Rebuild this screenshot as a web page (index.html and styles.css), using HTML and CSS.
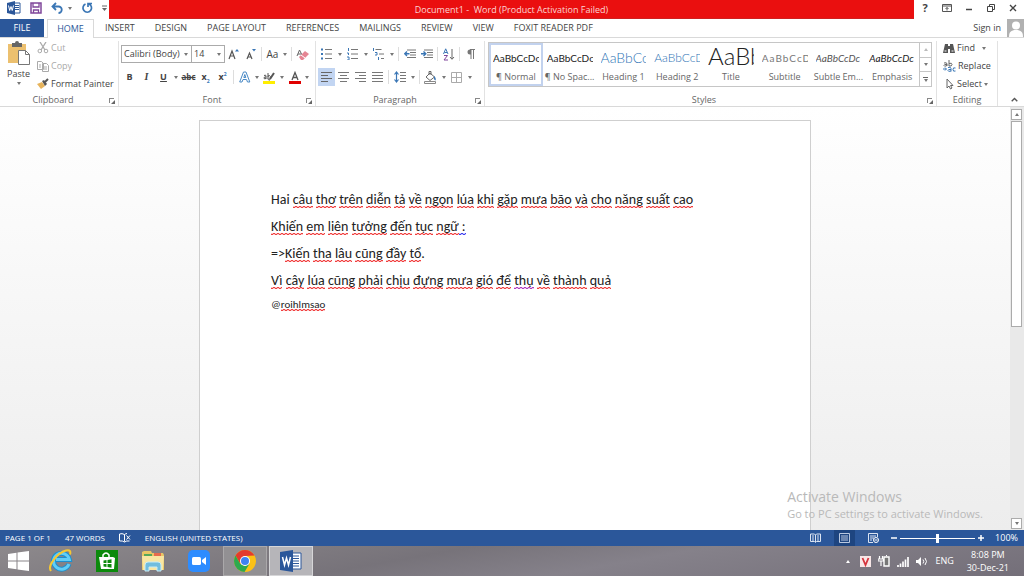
FILE: index.html
```html
<!DOCTYPE html>
<html lang="en">
<head>
  <meta charset="UTF-8" />
  <meta name="viewport" content="width=device-width, initial-scale=1.0" />
  <title>Document1 - Word</title>
  <link rel="stylesheet" href="styles.css">
</head>
<body>
  <header class="titlebar">
    <div class="quick">
      <svg class="q-word" width="14" height="14" viewBox="0 0 14 14"><path d="M7 2h6v10H7z" fill="#fff" stroke="#2b579a"/><path d="M8 4.500h4M8 6.500h4M8 8.500h4" stroke="#2b579a"/><path d="M0 2l8-2v14l-8-2z" fill="#2b579a"/><path d="M1.500 4.500l1.200 5L4 5.500l1.200 4 1.300-5" fill="none" stroke="#fff"/></svg>
      <button aria-label="Save"><svg width="12" height="12" viewBox="0 0 12 12"><path d="M1 1h10v10H1z" fill="#fff" stroke="#80479b" stroke-width="1.500"/><path d="M3 1v4h6V1M3.500 11V8h5v3" fill="none" stroke="#80479b" stroke-width="1.300"/></svg></button>
      <button aria-label="Undo"><svg width="13" height="12" viewBox="0 0 13 12"><path d="M5 1L1.500 4.500 5 8M2 4.500h5.500a3 3 0 010 6.500" fill="none" stroke="#3a76b5" stroke-width="1.800"/></svg><i class="caret"></i></button>
      <button aria-label="Redo"><svg width="12" height="12" viewBox="0 0 12 12"><path d="M4.500 2A4.300 4.300 0 108 2M7 5V1.500h4" fill="none" stroke="#3a76b5" stroke-width="1.700"/></svg></button>
      <button aria-label="Customize toolbar"><svg width="5" height="7" viewBox="0 0 5 7"><path d="M0 1h5" stroke="#666"/><path d="M0 3h5L2.500 6z" fill="#666"/></svg></button>
    </div>
    <div class="caption">Document1 -&nbsp; Word (Product Activation Failed)</div>
    <div class="window-buttons">
      <button aria-label="Help"><b>?</b></button>
      <button aria-label="Ribbon display"><svg width="10" height="8" viewBox="0 0 10 8"><path d="M.5.5h9v7h-9zM.5 2h9M5 6.500V3.500M3.500 5L5 3.500 6.500 5" fill="none" stroke="#555"/></svg></button>
      <button aria-label="Minimize"><svg width="8" height="8" viewBox="0 0 8 8"><path d="M1 5.500h6" stroke="#444" stroke-width="1.500"/></svg></button>
      <button aria-label="Restore"><svg width="8" height="8" viewBox="0 0 8 8"><path d="M.5 2.500h5v5h-5zM2.500 2V.500h5v5H6" fill="none" stroke="#444"/></svg></button>
      <button aria-label="Close"><svg width="8" height="8" viewBox="0 0 8 8"><path d="M1 1l6 6M7 1L1 7" stroke="#444" stroke-width="1.400"/></svg></button>
    </div>
  </header>

  <nav class="tabs">
    <button class="file">FILE</button>
    <button class="active">HOME</button>
    <button>INSERT</button>
    <button>DESIGN</button>
    <button>PAGE LAYOUT</button>
    <button>REFERENCES</button>
    <button>MAILINGS</button>
    <button>REVIEW</button>
    <button>VIEW</button>
    <button>FOXIT READER PDF</button>
    <a class="signin" href="#">Sign in
      <svg width="17" height="18" viewBox="0 0 17 18"><path d="M0 0h17v18H0z" fill="#b1b1b1"/><circle cx="9" cy="6.500" r="4" fill="#fff"/><path d="M2 18c0-5 2-7 7-7s7 2 7 7z" fill="#fff"/></svg></a>
  </nav>

  <section class="ribbon">
    <div class="group clipboard">
      <div class="group-body">
        <button class="paste">
          <svg width="24" height="25" viewBox="0 0 24 25"><path d="M1 3h18v19H1z" fill="#ecc06f"/><path d="M5 2h3a2 2 0 014 0h3v4H5z" fill="#666"/><path d="M11.500 9.500h7l4 4v10h-11z" fill="#fff" stroke="#777"/><path d="M18.500 9.500v4h4" fill="none" stroke="#777"/></svg>
          Paste
          <i class="caret"></i>
        </button>
        <div class="clip-list">
          <button class="off"><svg width="12" height="12" viewBox="0 0 12 12"><path d="M3 0l5 8M9 0L4 8" stroke="#aaa" stroke-width="1.300"/><circle cx="2.800" cy="9" r="1.800" fill="none" stroke="#aaa"/><circle cx="9" cy="9" r="1.800" fill="none" stroke="#aaa"/></svg>Cut</button>
          <button class="off"><svg width="12" height="12" viewBox="0 0 12 12"><path d="M.5 1.500h4l2 2v6h-6zM5.500 3.500h4l2 2v6h-6z" fill="#fff" stroke="#aaa"/><path d="M2 5h2M2 7h2M7 7h3M7 9h3" stroke="#aaa"/></svg>Copy</button>
          <button><svg width="12" height="12" viewBox="0 0 12 12"><path d="M0 6l5-2 3 4-4 3z" fill="#e7b45c"/><path d="M5 3l2-1 3 4-2 2z" fill="#555"/><path d="M8 4l3-3" stroke="#555" stroke-width="2"/></svg>Format Painter</button>
        </div>
      </div>
      <div class="group-name">Clipboard<i class="launcher"></i></div>
    </div>

    <div class="group font">
      <div class="group-body rows">
        <div class="row">
          <span class="combo name"><select aria-label="Font"><option>Calibri (Body)</option></select><i class="caret"></i></span>
          <span class="combo size"><select aria-label="Font size"><option>14</option></select><i class="caret"></i></span>
          <button class="tool" aria-label="Grow font"><svg width="12" height="12" viewBox="0 0 12 12"><path d="M1 11l3-8 3 8M2 8h4" fill="none" stroke="#555" stroke-width="1.200"/><path d="M7 3.500h4L9 1z" fill="#3a76b5"/></svg></button>
          <button class="tool" aria-label="Shrink font"><svg width="12" height="12" viewBox="0 0 12 12"><path d="M2 11l2.500-6L7 11M3 9h3" fill="none" stroke="#555" stroke-width="1.200"/><path d="M7 1h4L9 3.500z" fill="#3a76b5"/></svg></button>
          <i class="sep"></i>
          <button class="tool case">Aa</button><button class="drop" aria-label="Case options"><i class="caret"></i></button>
          <i class="sep"></i>
          <button class="tool" aria-label="Clear formatting"><svg width="13" height="13" viewBox="0 0 13 13"><path d="M1 8l2.500-6L6 7M2 6h3" fill="none" stroke="#666"/><path d="M3 9l6-6 4 3-6 6H5z" fill="#e58593"/><path d="M5 7l4 3" stroke="#fff"/></svg></button>
        </div>
        <div class="row">
          <button class="tool"><b>B</b></button>
          <button class="tool"><em class="serif">I</em></button>
          <button class="tool"><u>U</u></button><button class="drop" aria-label="Underline options"><i class="caret"></i></button>
          <button class="tool strike"><s>abc</s></button>
          <button class="tool"><span>x<sub>2</sub></span></button>
          <button class="tool"><span>x<sup>2</sup></span></button>
          <i class="sep"></i>
          <button class="tool" aria-label="Text effects"><svg width="12" height="12" viewBox="0 0 12 12"><path d="M.7 11L4.500 1h2.500l3.800 10H8.500L7.500 8.500H4L3 11zM4.800 6.500h2L5.800 3.500z" fill="#fff" stroke="#4a8ac6"/></svg></button><button class="drop" aria-label="Effect options"><i class="caret"></i></button>
          <button class="tool" aria-label="Highlight"><svg width="13" height="13" viewBox="0 0 13 13"><path d="M0 10h12v3H0z" fill="#ffee00"/><path d="M1 4.500q2-1 2 .5v3M3 6Q1 5.500 1 7t2 .5M5 2v6M5 6q0-2 1.500-1.500T7 8 5 7.500" fill="none" stroke="#555"/><path d="M7 8l4-6" stroke="#555" stroke-width="2"/></svg></button><button class="drop" aria-label="Highlight options"><i class="caret"></i></button>
          <button class="tool" aria-label="Font color"><svg width="12" height="13" viewBox="0 0 12 13"><path d="M0 10h12v3H0z" fill="#e00000"/><path d="M3 9l3-7.500L9 9M4 6.500h4" fill="none" stroke="#555" stroke-width="1.300"/></svg></button><button class="drop" aria-label="Color options"><i class="caret"></i></button>
        </div>
      </div>
      <div class="group-name">Font<i class="launcher"></i></div>
    </div>

    <div class="group paragraph">
      <div class="group-body rows">
        <div class="row">
          <button class="tool" aria-label="Bullets"><svg width="12" height="12" viewBox="0 0 12 12"><path d="M0 1.500h2M0 6h2M0 10.500h2" stroke="#3a76b5" stroke-width="2"/><path d="M4 1.500h7M4 6h7M4 10.500h7" stroke="#777"/></svg></button><button class="drop" aria-label="Bullet options"><i class="caret"></i></button>
          <button class="tool" aria-label="Numbering"><svg width="12" height="12" viewBox="0 0 12 12"><path d="M1.500 0v3M0 5h1.500v2M0 9h2v3H0" fill="none" stroke="#3a76b5"/><path d="M4 1.500h7M4 6h7M4 10.500h7" stroke="#777"/></svg></button><button class="drop" aria-label="Number options"><i class="caret"></i></button>
          <button class="tool" aria-label="Multilevel list"><svg width="13" height="12" viewBox="0 0 13 12"><path d="M1.500 0v3M3 4.500h2v2.500H3M6.500 9v3" fill="none" stroke="#3a76b5"/><path d="M3.500 1.500h6M7 6h5M9 10.500h3" stroke="#777"/></svg></button><button class="drop" aria-label="List options"><i class="caret"></i></button>
          <i class="sep"></i>
          <button class="tool" aria-label="Decrease indent"><svg width="12" height="10" viewBox="0 0 12 10"><path d="M3 1h9M6 3.500h6M6 6h6M3 8.500h9" stroke="#777"/><path d="M5.500 4.800H1M3 2.500L.7 4.800 3 7" fill="none" stroke="#3a76b5" stroke-width="1.400"/></svg></button>
          <button class="tool" aria-label="Increase indent"><svg width="12" height="10" viewBox="0 0 12 10"><path d="M3 1h9M6 3.500h6M6 6h6M3 8.500h9" stroke="#777"/><path d="M0 4.800h4.500M2.500 2.500l2.300 2.300L2.500 7" fill="none" stroke="#3a76b5" stroke-width="1.400"/></svg></button>
          <i class="sep"></i>
          <button class="tool" aria-label="Sort"><svg width="12" height="13" viewBox="0 0 12 13"><path d="M.5 6L2.700.8 5 6M1.500 4.500h2.500" fill="none" stroke="#3a76b5"/><path d="M1 7.500h3.500L1 12h4" fill="none" stroke="#80479b"/><path d="M9 1v10M7 9l2 2.300L11 9" fill="none" stroke="#666"/></svg></button>
          <i class="sep"></i>
          <button class="tool" aria-label="Show marks"><svg width="9" height="11" viewBox="0 0 9 11"><path d="M8 .5H4a2.500 2.500 0 000 5h1V1z" fill="#777"/><path d="M5 .5V10M7.500.5V10M4 .5h5" stroke="#777"/></svg></button>
        </div>
        <div class="row">
          <button class="tool on" aria-label="Align left"><svg width="11" height="10" viewBox="0 0 11 10"><path d="M0 .5h11M0 3.500h7M0 6.500h11M0 9.500h7" stroke="#666"/></svg></button>
          <button class="tool" aria-label="Center"><svg width="11" height="10" viewBox="0 0 11 10"><path d="M0 .5h11M2 3.500h7M0 6.500h11M2 9.500h7" stroke="#777"/></svg></button>
          <button class="tool" aria-label="Align right"><svg width="11" height="10" viewBox="0 0 11 10"><path d="M0 .5h11M4 3.500h7M0 6.500h11M4 9.500h7" stroke="#777"/></svg></button>
          <button class="tool" aria-label="Justify"><svg width="11" height="10" viewBox="0 0 11 10"><path d="M0 .5h11M0 3.500h11M0 6.500h11M0 9.500h11" stroke="#777"/></svg></button>
          <i class="sep"></i>
          <button class="tool" aria-label="Line spacing"><svg width="12" height="12" viewBox="0 0 12 12"><path d="M2.500 1v10M.5 3.500l2-2.500 2 2.500M.5 8.500l2 2.500 2-2.500" fill="none" stroke="#3a76b5" stroke-width="1.200"/><path d="M6 1.500h6M6 4.500h6M6 7.500h6M6 10.500h6" stroke="#777"/></svg></button><button class="drop" aria-label="Spacing options"><i class="caret"></i></button>
          <i class="sep"></i>
          <button class="tool" aria-label="Shading"><svg width="13" height="13" viewBox="0 0 13 13"><path d="M2 6l4-4 4.500 4L6 9.500zM5 4V.5h2V4" fill="#fff" stroke="#666"/><path d="M10 5q2.500 2 1.500 4.500Q9.500 9 10 5z" fill="#3a76b5"/><path d="M.5 10.500h11v2H.5z" fill="#fff" stroke="#888"/></svg></button><button class="drop" aria-label="Shading options"><i class="caret"></i></button>
          <button class="tool" aria-label="Borders"><svg width="11" height="11" viewBox="0 0 11 11"><path d="M.5.5h10v10H.5zM5.500.5v10M.5 5.500h10" fill="none" stroke="#aaa"/></svg></button><button class="drop" aria-label="Border options"><i class="caret"></i></button>
        </div>
      </div>
      <div class="group-name">Paragraph<i class="launcher"></i></div>
    </div>

    <div class="group styles">
      <div class="group-body">
        <div class="gallery">
          <button class="style selected"><span class="sample">AaBbCcDc</span><span>¶ Normal</span></button>
          <button class="style"><span class="sample">AaBbCcDc</span><span>¶ No Spac...</span></button>
          <button class="style"><span class="sample h1">AaBbCc</span><span>Heading 1</span></button>
          <button class="style"><span class="sample h2">AaBbCcD</span><span>Heading 2</span></button>
          <button class="style"><span class="sample title">AaBb</span><span>Title</span></button>
          <button class="style"><span class="sample subtitle">AaBbCcD</span><span>Subtitle</span></button>
          <button class="style"><span class="sample subtle">AaBbCcDc</span><span>Subtle Em...</span></button>
          <button class="style"><span class="sample emphasis">AaBbCcDc</span><span>Emphasis</span></button>
          <div class="gallery-scroll">
            <button class="off" aria-label="Previous styles"><i class="caret up"></i></button>
            <button aria-label="Next styles"><i class="caret"></i></button>
            <button class="more" aria-label="More styles"><i class="caret"></i></button>
          </div>
        </div>
      </div>
      <div class="group-name">Styles<i class="launcher"></i></div>
    </div>

    <div class="group editing">
      <div class="group-body edit-list">
        <button><svg width="12" height="11" viewBox="0 0 12 11"><path d="M2 1h3v2h2V1h3l2 9H7V6H5v4H0z" fill="#555"/><path d="M1.500 8h2M8.500 8h2" stroke="#fff"/></svg>Find<i class="caret far"></i></button>
        <button><svg width="13" height="12" viewBox="0 0 13 12"><path d="M1 3q3-1 3 1v2M4 4.500Q1 4 1 5.500T4 5.500M6 0v6M6 3.500q3-1 3 1T6 6" fill="none" stroke="#666"/><path d="M0 9h3M2 7.500L3.500 9 2 10.500M5 7.500q3-1 3 1v3M8 9.500q-3-.5-3 1t3 .5M12.500 8Q10 7 10 9.500t2.500 1.500" fill="none" stroke="#3a76b5"/></svg>Replace</button>
        <button><svg width="12" height="12" viewBox="0 0 12 12"><path d="M4 1v9l2-2 1.500 3 1.500-1L7.500 7.500H10z" fill="#fff" stroke="#666"/></svg>Select<i class="caret"></i></button>
      </div>
      <div class="group-name">Editing</div>
    </div>
    <button class="collapse" aria-label="Collapse ribbon"><svg width="7" height="5" viewBox="0 0 7 5"><path d="M.7 4.300L3.500 1.500l2.800 2.800" fill="none" stroke="#555" stroke-width="1.400"/></svg></button>
  </section>

  <main class="workspace">
    <article class="page">
      <p>Hai <span class="err">câu</span> <span class="err">thơ</span> <span class="err">trên</span> <span class="err">diễn</span> <span class="err">tả</span> <span class="err">về</span> <span class="err">ngọn</span> <span class="err">lúa</span> <span class="err">khi</span> <span class="err">gặp</span> <span class="err">mưa</span> <span class="err">bão</span> <span class="err">và</span> <span class="err">cho</span> <span class="err">năng</span> <span class="err">suất</span> <span class="err">cao</span></p>
      <p><span class="err">Khiến</span> <span class="err">em</span> <span class="err">liên</span> <span class="err">tưởng</span> <span class="err">đến</span> <span class="err">tục</span> <span class="err">ngữ</span><span class="err grammar"> :</span></p>
      <p>=&gt;<span class="err">Kiến</span> <span class="err">tha</span> <span class="err">lâu</span> <span class="err">cũng</span> <span class="err">đầy</span> <span class="err">tổ</span>.</p>
      <p><span class="err">Vì</span> <span class="err">cây</span> <span class="err">lúa</span> <span class="err">cũng</span> <span class="err">phải</span> <span class="err">chịu</span> <span class="err">đựng</span> <span class="err">mưa</span> <span class="err">gió</span> <span class="err">để</span> <span class="err both">thụ</span> <span class="err">về</span> <span class="err">thành</span> <span class="err">quả</span></p>
      <p class="small">@<span class="err">roihlmsao</span></p>
    </article>
    <div class="scrollbar">
      <button aria-label="Scroll up"><i class="caret up"></i></button>
      <div class="thumb"></div>
      <button class="down" aria-label="Scroll down"><i class="caret"></i></button>
    </div>
    <div class="watermark"><strong>Activate Windows</strong>Go to PC settings to activate Windows.</div>
  </main>

  <footer class="status">
    <span>PAGE 1 OF 1</span>
    <span>47 WORDS</span>
    <svg width="12" height="10" viewBox="0 0 12 10"><path d="M5.500 1.500v7M5.500 1.500Q3 0 .5 1v7q3-.5 5 1 2-1.500 5-1M5.500 1.500Q7 .5 8 .5" fill="none" stroke="#fff"/><path d="M7.500 2.500l3.500 4M11 2.500l-3.500 4" stroke="#fff"/></svg>
    <span>ENGLISH (UNITED STATES)</span>
    <div class="view-tools">
      <div class="views">
        <button aria-label="Read mode"><svg width="11" height="10" viewBox="0 0 11 10"><path d="M.5 1h4l1 1 1-1h4v7.500h-4l-1 1-1-1h-4zM5.500 2v7M2 3h2M2 5h2M2 7h2M7 3h2M7 5h2M7 7h2" fill="none" stroke="#dbe4f2"/></svg></button>
        <button class="on" aria-label="Print layout"><svg width="11" height="10" viewBox="0 0 11 10"><path d="M.5.5h10v9H.5zM2 3h7M2 5h7M2 7h7" fill="none" stroke="#b9c8e0"/></svg></button>
        <button aria-label="Web layout"><svg width="11" height="10" viewBox="0 0 11 10"><path d="M5 9.500H.5v-9h9V4M2 3h6M2 5h4M2 7h2" fill="none" stroke="#dbe4f2"/><circle cx="8" cy="7" r="2.500" fill="none" stroke="#fff"/><path d="M6.500 7h3" stroke="#fff"/></svg></button>
      </div>
      <div class="zoom">
        <button aria-label="Zoom out"><svg width="6" height="6" viewBox="0 0 6 6"><path d="M0 3h6" stroke="#fff" stroke-width="1.500"/></svg></button>
        <input type="range" min="0" max="100" value="50" aria-label="Zoom">
        <button aria-label="Zoom in"><svg width="6" height="6" viewBox="0 0 6 6"><path d="M0 3h6M3 0v6" stroke="#fff" stroke-width="1.500"/></svg></button>
      </div>
      <span class="percent">100%</span>
    </div>
  </footer>

  <div class="taskbar">
    <button class="start" aria-label="Start"><svg width="21" height="20" viewBox="0 0 21 20"><path d="M0 3l8.500-1.200v7.700H0zM9.500 1.600L21 0v9.500H9.500zM0 10.500h8.500v7.700L0 17zM9.500 10.500H21V20L9.500 18.400z" fill="#fff"/></svg></button>
    <button aria-label="Internet Explorer"><svg width="24" height="24" viewBox="0 0 24 24"><path d="M20 15a8 8 0 11.300-4.500H7" fill="none" stroke="#1b8fd0" stroke-width="5"/><path d="M20 15a8 8 0 11.300-4.500H7" fill="none" stroke="#62cdf5" stroke-width="3"/><path d="M2 22C-2 17 8 4 17 1.500c4-1 5 1 4 4" fill="none" stroke="#f6c732" stroke-width="2"/></svg></button>
    <button aria-label="Store"><svg width="22" height="22" viewBox="0 0 22 22"><path d="M0 0h22v22H0z" fill="#0b8a0b"/><path d="M3 7h14l2 1-1 11H5z" fill="#fff"/><path d="M7 8V5q3-4 6 0v3" fill="none" stroke="#fff" stroke-width="1.500"/><path d="M7.500 10.500l3-.5v3h-3zM11.500 9.900l4-.6v3.700h-4zM7.500 14h3v3l-3-.5zM11.500 14h4v3.700l-4-.6z" fill="#0b8a0b"/></svg></button>
    <button aria-label="File Explorer"><svg width="24" height="22" viewBox="0 0 24 22"><path d="M1 2l2-1h7l1 2h11l1 2v15H1z" fill="#e9c665"/><path d="M3 4h8v3H3z" fill="#56a85a"/><path d="M13 3h7v4h-7z" fill="#e66b4d"/><path d="M1 6h22l-1 14H2z" fill="#f9e6a2"/><path d="M4 21v-6q0-3 3-3h10q3 0 3 3v6h-4v-4H8v4z" fill="#71bdde" stroke="#c8ecf7"/></svg></button>
    <button aria-label="Zoom"><svg width="22" height="22" viewBox="0 0 22 22"><rect width="22" height="22" rx="5" fill="#2d8cff"/><rect x="4" y="7" width="9" height="8" rx="1.500" fill="#fff"/><path d="M14 10l4-3v8l-4-3z" fill="#fff"/></svg></button>
    <button class="running" aria-label="Chrome"><svg width="22" height="22" viewBox="0 0 22 22"><circle cx="11" cy="11" r="11" fill="#fbc116"/><path d="M1.500 5.500A11 11 0 0120.500 5.500L11 6 6.200 13.700z" fill="#e33b2e"/><path d="M1.500 5.500A11 11 0 0010.500 22l5-8.300L11 16l-4.800-2.300z" fill="#2da94f"/><circle cx="11" cy="11" r="5" fill="#fff"/><circle cx="11" cy="11" r="4" fill="#3e82f1"/></svg></button>
    <button class="running current" aria-label="Word"><svg width="22" height="22" viewBox="0 0 22 22"><path d="M11 3h10v16H11z" fill="#fff" stroke="#2b579a"/><path d="M13 6h6M13 8.500h6M13 11h6M13 13.500h6M13 16h6" stroke="#2b579a"/><path d="M0 2l13-2v22L0 20z" fill="#2b579a"/><path d="M2.500 7l2 8 2-7 2 7 2-8" fill="none" stroke="#fff" stroke-width="1.500"/></svg></button>
    <div class="tray">
      <i class="caret up"></i>
      <svg width="11" height="11" viewBox="0 0 11 11"><path d="M0 0h11v11H0z" fill="#f8e7e7"/><path d="M2.500 2l3 7 3-7" fill="none" stroke="#d5333d" stroke-width="1.800"/></svg>
      <svg width="12" height="12" viewBox="0 0 12 12"><path d="M6 2h5v9H6z" fill="#777" stroke="#fff" stroke-width="1.400"/><path d="M8 .7h1M1.500 1v3M4.500 1v3M0 4h5.500v2H0zM3 6v5" fill="none" stroke="#fff" stroke-width="1.200"/></svg>
      <svg width="12" height="11" viewBox="0 0 12 11"><path d="M1 11V9M3.500 11V7.500M6 11V5.500M8.500 11V3.500M11 11V1" stroke="#fff" stroke-width="1.700"/></svg>
      <svg width="12" height="11" viewBox="0 0 12 11"><path d="M0 4h2l3-3v9L2 7H0z" fill="#fff"/><path d="M7 3.500q1.500 2 0 4M9 2q3 3.500 0 7" fill="none" stroke="#fff"/></svg>
      <span class="lang">ENG</span>
      <span class="clock">8:08 PM<br>30-Dec-21</span>
    </div>
  </div>
</body>
</html>
```
FILE: styles.css
```css
* {
  box-sizing: border-box;
}
body {
  margin: 0;
  height: 100vh;
  display: flex;
  flex-direction: column;
  overflow: hidden;
  font-family: 'Open Sans', 'Noto Sans', sans-serif;
  font-size: 9px;
  line-height: 12px;
  color: #444;
  background-color: #fff;
}
button, select {
  font: inherit;
  color: inherit;
  background: none;
  border: none;
  padding: 0;
  white-space: nowrap;
}
svg {
  display: block;
  flex: none;
}
.caret {
  flex: none;
  width: 0;
  border: 2px solid transparent;
  border-top: 3px solid #777;
  border-bottom: 0;
}
.caret.up {
  border-top: 0;
  border-bottom: 3px solid #777;
}

/* title bar */
.titlebar {
  display: flex;
  height: 19px;
  flex: none;
}
.quick {
  width: 109px;
  display: flex;
  align-items: center;
  justify-content: space-between;
  padding: 0 2px 3px 7px;
}
.quick button {
  display: flex;
  align-items: center;
  gap: 4px;
}
.caption {
  flex: 1;
  background-color: #ea0f0f;
  color: #fbd5d5;
  text-align: center;
  line-height: 19px;
  border-bottom: 1px solid #cf2020;
}
.window-buttons {
  width: 110px;
  display: flex;
  align-items: center;
  padding-bottom: 3px;
}
.window-buttons button {
  flex: 1;
  display: flex;
  justify-content: center;
}
.window-buttons b {
  font-size: 11px;
}

/* tabs */
.tabs {
  display: flex;
  flex: none;
  height: 19px;
  border-bottom: 1px solid #d9d9d9;
}
.tabs button {
  padding: 0 10px;
}
.tabs .file {
  width: 44px;
  padding: 0;
  margin-right: 3px;
  background-color: #2b579a;
  color: #fff;
}
.tabs .active {
  width: 47px;
  height: 19px;
  padding: 0;
  margin-right: 1px;
  color: #2b579a;
  background-color: #fff;
  border: 1px solid #d9d9d9;
  border-bottom: 0;
}
.signin {
  display: flex;
  align-items: center;
  gap: 6px;
  margin-left: auto;
  color: #444;
  text-decoration: none;
}

/* ribbon */
.ribbon {
  display: flex;
  flex: none;
  height: 69px;
  border-bottom: 1px solid #d9d9d9;
}
.group {
  display: flex;
  flex-direction: column;
  margin-top: 3px;
  border-right: 1px solid #e2e2e2;
}
.group-body {
  flex: 1;
  display: flex;
}
.group-name {
  position: relative;
  text-align: center;
  color: #666;
  padding-right: 12px;
  line-height: 13px;
}
.launcher {
  position: absolute;
  right: 4px;
  bottom: 3px;
  width: 5px;
  height: 5px;
  border: 1px solid #888;
  border-right: 0;
  border-bottom: 0;
}
.launcher::after {
  content: "";
  position: absolute;
  right: -1px;
  bottom: -1px;
  border: 2px solid transparent;
  border-right-color: #666;
  border-bottom-color: #666;
}
.clipboard {
  width: 119px;
}
.paste {
  display: flex;
  flex-direction: column;
  align-items: center;
  gap: 2px;
  width: 37px;
}
.clip-list {
  display: flex;
  flex-direction: column;
  gap: 6px;
}
.clip-list button, .edit-list button {
  display: flex;
  align-items: center;
  gap: 2px;
}
.off {
  color: #aaa;
}
.font {
  width: 197px;
  padding-left: 2px;
}
.rows {
  flex-direction: column;
  gap: 5px;
  padding-top: 4px;
}
.row {
  display: flex;
  align-items: center;
  height: 18px;
}
.combo {
  display: flex;
  align-items: center;
  height: 18px;
  padding-right: 3px;
  border: 1px solid #ababab;
}
.combo.name {
  width: 71px;
}
.combo.size {
  width: 33px;
  border-left: 0;
}
.combo select {
  flex: 1;
  min-width: 0;
  padding-left: 2px;
  appearance: none;
}
.tool {
  display: flex;
  flex: none;
  align-items: center;
  justify-content: center;
  width: 17px;
  height: 18px;
}
.tool.on {
  background-color: #c2d5f2;
}
.tool b, .tool u {
  font-weight: bold;
}
.case {
  font-size: 10px;
}
.serif {
  font-family: 'Liberation Serif', serif;
  font-weight: bold;
  font-size: 10px;
}
.strike {
  font-size: 8px;
  font-weight: bold;
}
.tool span {
  font-weight: bold;
}
.tool sub, .tool sup {
  font-size: 5px;
  line-height: 5px;
  color: #3a76b5;
}
.drop {
  display: flex;
  flex: none;
  justify-content: center;
  width: 9px;
}
.font .drop {
  width: 8px;
}
.sep {
  width: 1px;
  height: 14px;
  margin: 0 2px;
  background-color: #ddd;
}
.paragraph {
  width: 169px;
  padding-left: 2px;
}
.styles {
  flex: 1;
  min-width: 0;
  padding: 1px 4px 0 3px;
}
.styles .group-body {
  align-items: flex-start;
}
.styles .launcher {
  right: 0;
}
.gallery {
  display: flex;
  width: 100%;
  height: 45px;
  border: 1px solid #c6c6c6;
}
.style {
  flex: 1;
  min-width: 0;
  padding: 0 4px 3px;
  display: flex;
  flex-direction: column;
  align-items: center;
  justify-content: flex-end;
  color: #666;
}
.style.selected {
  padding: 0 2px 1px;
  border: 2px solid #c2d2ee;
}
.sample {
  width: 100%;
  height: 24px;
  overflow: hidden;
  text-align: left;
  font-family: Lato, sans-serif;
  font-size: 10px;
  line-height: 22px;
  color: #222;
}
.sample.h1 {
  font-size: 14px;
  font-weight: 300;
  color: #2e74b5;
}
.sample.h2 {
  font-size: 12px;
  font-weight: 300;
  color: #2e74b5;
}
.sample.title {
  font-size: 24px;
  font-weight: 300;
  line-height: 18px;
}
.sample.subtitle {
  color: #777;
  letter-spacing: 1px;
}
.sample.subtle {
  font-style: italic;
  color: #555;
}
.sample.emphasis {
  font-style: italic;
}
.gallery-scroll {
  width: 12px;
  display: flex;
  flex-direction: column;
  border-left: 1px solid #c6c6c6;
}
.gallery-scroll button {
  flex: 1;
  display: flex;
  flex-direction: column;
  align-items: center;
  justify-content: center;
}
.gallery-scroll .off .caret {
  border-bottom-color: #bbb;
}
.gallery-scroll button + button {
  border-top: 1px solid #c6c6c6;
}
.more::before {
  content: "";
  width: 5px;
  height: 1px;
  margin-bottom: 1px;
  background-color: #666;
}
.editing {
  width: 61px;
}
.editing .group-name {
  padding: 0;
}
.edit-list {
  flex-direction: column;
  gap: 6px;
  padding-left: 6px;
}
.clip-list, .edit-list {
  padding-top: 1px;
}
.far {
  margin-left: 5px;
}
.collapse {
  width: 26px;
  display: flex;
  align-items: flex-end;
  justify-content: center;
  padding: 0 0 4px 6px;
}

/* document */
.workspace {
  position: relative;
  flex: 1;
  min-height: 0;
  display: flex;
  justify-content: center;
  background: linear-gradient(#fff, #ededed);
}
.page {
  width: 612px;
  max-width: 100%;
  margin: 13px auto 0;
  padding: 68px 71px 0;
  background-color: #fff;
  border: 1px solid #cfcfcf;
  border-bottom: 0;
  font-family: Carlito, Lato, 'Open Sans', sans-serif;
  font-size: 14px;
  color: #222;
}
.page p {
  margin: 0 0 5px;
  line-height: 22px;
  white-space: nowrap;
}
.page .small {
  font-size: 11px;
  line-height: 16px;
}
/* two offset rows of dots make the proofing squiggle */
.err {
  background:
    linear-gradient(90deg, #f04040 50%, #fbc4c4 50%) 0 100% / 4px 1px repeat-x,
    linear-gradient(90deg, #fbc4c4 50%, #f04040 50%) 0 calc(100% - 1px) / 4px 1px repeat-x;
}
.grammar {
  background-image: linear-gradient(90deg, #4040f0 50%, #c4c4fb 50%), linear-gradient(90deg, #c4c4fb 50%, #4040f0 50%);
}
.both {
  background-image: linear-gradient(90deg, #b040c0 50%, #ecc4f0 50%), linear-gradient(90deg, #ecc4f0 50%, #b040c0 50%);
}
.scrollbar {
  width: 14px;
  display: flex;
  flex-direction: column;
  padding: 2px 2px 1px 1px;
  background-color: #e9e9e9;
}
.scrollbar button {
  height: 11px;
  display: flex;
  align-items: center;
  justify-content: center;
  background-color: #fff;
  border: 1px solid #ababab;
}
.thumb {
  height: 49%;
  margin-top: 1px;
  background-color: #fff;
  border: 1px solid #ababab;
}
.scrollbar .down {
  margin-top: auto;
}
.watermark {
  position: absolute;
  right: 41px;
  bottom: 8px;
  font-size: 11px;
  line-height: 16px;
  color: #b9b9b9;
}
.watermark strong {
  display: block;
  font-size: 14px;
  font-weight: normal;
  line-height: 18px;
}

/* status bar */
.status {
  display: flex;
  flex: none;
  align-items: center;
  height: 16px;
  padding: 0 6px 0 5px;
  gap: 14px;
  font-size: 8px;
  background-color: #2b579a;
  color: #fff;
}
.view-tools {
  display: flex;
  align-items: center;
  gap: 3px;
  margin-left: auto;
}
.views {
  display: flex;
}
.views button {
  display: flex;
  align-items: center;
  justify-content: center;
  width: 29px;
  height: 16px;
}
.views .on {
  width: 21px;
  margin: 0 4px;
  background-color: #1e4580;
}
.zoom {
  display: flex;
  align-items: center;
  gap: 3px;
}
.zoom input {
  appearance: none;
  width: 75px;
  height: 10px;
  margin: 0;
  background: linear-gradient(#fff, #fff) center / 100% 1px no-repeat;
}
.zoom input::-webkit-slider-thumb {
  appearance: none;
  width: 3px;
  height: 9px;
  background-color: #fff;
}
.percent {
  margin-left: 8px;
  font-size: 9px;
}

/* taskbar */
.taskbar {
  display: flex;
  flex: none;
  height: 30px;
  background: linear-gradient(170deg, #8d898c, #77737a 40%, #85818a 60%, #746f79);
  color: #fff;
}
.taskbar button {
  width: 44px;
  margin-right: 2px;
  display: flex;
  align-items: center;
  justify-content: center;
}
.taskbar .start {
  width: 37px;
}
.taskbar .running {
  border: 1px solid #aaa8aa;
  background-color: #929093;
}
.taskbar .current {
  border-color: #d6d6d8;
  background-color: #b6b5b9;
}
.tray {
  display: flex;
  align-items: center;
  gap: 7px;
  margin-left: auto;
  padding-right: 15px;
}
.tray .caret.up {
  border-bottom-color: #fff;
  margin-right: 3px;
}
.clock {
  text-align: center;
  margin-left: 6px;
  line-height: 13px;
}
```
